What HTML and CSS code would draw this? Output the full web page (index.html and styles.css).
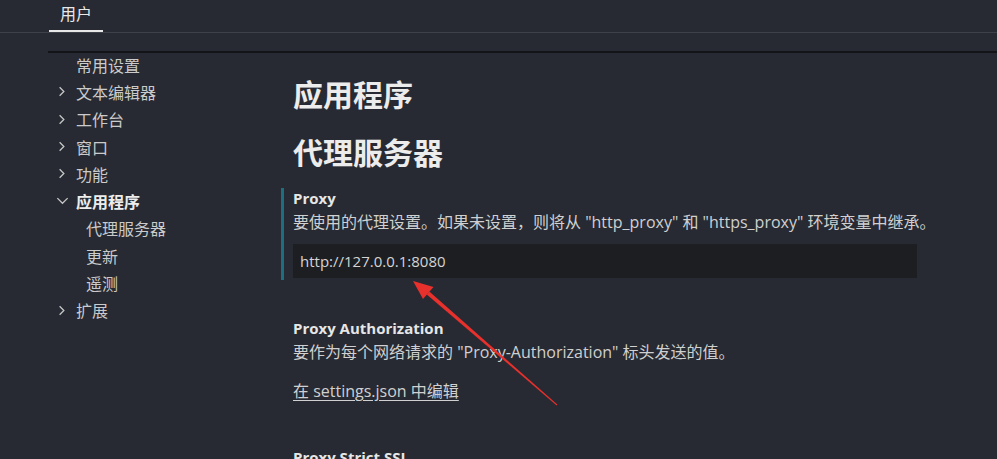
FILE: index.html
```html
<!DOCTYPE html>
<html lang="zh-CN">
<head>
<meta charset="utf-8">
<title>设置</title>
<link rel="stylesheet" href="styles.css">
</head>
<body>
<div class="header">
  <div class="tabs">
    <div class="tab active">用户</div>
  </div>
</div>
<div class="divider"></div>
<div class="main">
  <nav class="toc">
    <div class="toc-item leaf"><span class="toc-label">常用设置</span></div>
    <div class="toc-item"><svg class="chev" viewBox="0 0 16 16"><path d="M6 3.5 L10.5 8 L6 12.5"/></svg><span class="toc-label">文本编辑器</span></div>
    <div class="toc-item"><svg class="chev" viewBox="0 0 16 16"><path d="M6 3.5 L10.5 8 L6 12.5"/></svg><span class="toc-label">工作台</span></div>
    <div class="toc-item"><svg class="chev" viewBox="0 0 16 16"><path d="M6 3.5 L10.5 8 L6 12.5"/></svg><span class="toc-label">窗口</span></div>
    <div class="toc-item"><svg class="chev" viewBox="0 0 16 16"><path d="M6 3.5 L10.5 8 L6 12.5"/></svg><span class="toc-label">功能</span></div>
    <div class="toc-item open"><svg class="chev" viewBox="0 0 16 16"><path d="M2.5 5.5 L8 11 L13.5 5.5"/></svg><span class="toc-label">应用程序</span></div>
    <div class="toc-item sub"><span class="toc-label">代理服务器</span></div>
    <div class="toc-item sub"><span class="toc-label">更新</span></div>
    <div class="toc-item sub"><span class="toc-label">遥测</span></div>
    <div class="toc-item"><svg class="chev" viewBox="0 0 16 16"><path d="M6 3.5 L10.5 8 L6 12.5"/></svg><span class="toc-label">扩展</span></div>
  </nav>
  <section class="content">
    <h1 class="group-title">应用程序</h1>
    <h2 class="group-title sub-title">代理服务器</h2>
    <div class="setting focused">
      <div class="setting-title">Proxy</div>
      <div class="setting-desc">要使用的代理设置。如果未设置，则将从 "http_proxy" 和 "https_proxy" 环境变量中继承。</div>
      <div class="input">http://127.0.0.1:8080</div>
    </div>
    <div class="setting second">
      <div class="setting-title">Proxy Authorization</div>
      <div class="setting-desc">要作为每个网络请求的 "Proxy-Authorization" 标头发送的值。</div>
      <a class="edit-link">在 settings.json 中编辑</a>
    </div>
    <div class="setting third">
      <div class="setting-title">Proxy Strict SSL</div>
    </div>
  </section>
</div>
<svg class="arrow" viewBox="0 0 997 459" width="997" height="459">
  <polygon points="429.3,291.5 426.7,294.5 556.7,405.4 557.3,404.6"/>
  <polygon points="413,281 433.5,287 423,299"/>
</svg>
</body>
</html>
```
FILE: styles.css
```css
html, body {
  margin: 0;
  padding: 0;
  height: 100%;
  overflow: hidden;
}
body {
  background: #272a32;
  color: #cccccc;
  font-family: "Open Sans", "Noto Sans CJK SC", sans-serif;
  font-size: 16px;
  position: relative;
}
.header {
  padding-left: 49px;
  height: 32px;
  border-bottom: 1px solid #3e414a;
}
.tabs {
  display: flex;
}
.tab {
  width: 54px;
  height: 30px;
  line-height: 28px;
  text-align: center;
  color: #e8e8e8;
  font-size: 16px;
  border-bottom: 2px solid #e8e8e8;
}
.divider {
  margin-top: 18px;
  margin-left: 48px;
  height: 2px;
  background: #131417;
}
.main {
  display: flex;
}
.toc {
  width: 281px;
  flex: none;
  margin-top: -2px;
}
.toc-item {
  height: 27.3px;
  display: flex;
  align-items: center;
  padding-left: 76px;
  color: #cbcbcb;
  font-size: 16px;
  position: relative;
}
.toc-item .chev {
  position: absolute;
  left: 54px;
  top: 6px;
  width: 15px;
  height: 15px;
  fill: none;
  stroke: #c5c5c5;
  stroke-width: 1.4;
}
.toc-item.open .chev {
  left: 55px;
  top: 6px;
}
.toc-item.open .toc-label {
  font-weight: 700;
  color: #ededed;
}
.toc-item.sub {
  padding-left: 86px;
}
.content {
  flex: 1;
}
.group-title {
  margin: 22px 0 0 12px;
  font-size: 30px;
  line-height: 40px;
  font-weight: 700;
  color: #ececec;
}
.sub-title {
  margin-top: 18px;
}
.setting {
  padding-left: 12px;
  border-left: 3px solid transparent;
}
.setting.focused {
  margin-top: 15px;
  border-left-color: #1c6f80;
  padding-bottom: 2px;
}
.setting .setting-title,
.setting .setting-desc,
.setting .input,
.setting .edit-link {
  margin-left: -3px;
}
.setting-title {
  font-size: 15px;
  line-height: 20px;
  font-weight: 700;
  color: #e6e6e6;
}
.setting-desc {
  margin-top: 4px;
  line-height: 20px;
  font-size: 16px;
  color: #d0d0d0;
}
.input {
  margin-top: 12px;
  width: 617px;
  height: 34px;
  line-height: 34px;
  padding-left: 7px;
  background: #1d1e22;
  color: #d4d4d4;
  font-size: 15px;
}
.setting.second {
  margin-top: 38px;
}
.edit-link {
  display: inline-block;
  margin-top: 19px;
  line-height: 20px;
  color: #d0d0d0;
  text-decoration: underline;
  text-underline-offset: 3px;
}
.setting.third {
  margin-top: 45px;
}
.arrow {
  position: absolute;
  left: 0;
  top: 0;
  pointer-events: none;
}
.arrow polygon {
  fill: #e8302c;
}
```
